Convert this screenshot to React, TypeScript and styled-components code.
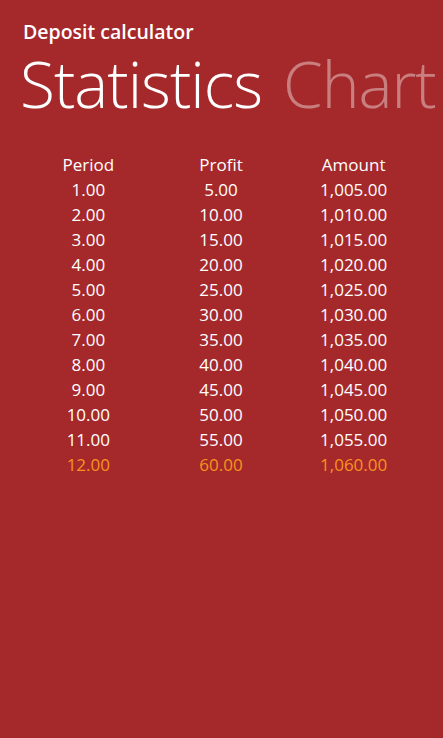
import React from "react";
import styled, { createGlobalStyle } from "styled-components";

const GlobalStyle = createGlobalStyle`
	html, body {
		margin: 0;
		padding: 0;
		background: #a5292b;
	}
`;

const Page = styled.div`
	background: #a5292b;
	color: #ffffff;
	font-family: "Open Sans", "Noto Sans", sans-serif;
	height: 738px;
	overflow: hidden;
	width: 443px;
`;

const AppTitle = styled.div`
	font-size: 19.5px;
	font-weight: 600;
	line-height: 24px;
	padding: 20px 0 0 23px;
`;

const Pivot = styled.div`
	display: flex;
	gap: 21px;
	margin-top: 6px;
	padding-left: 20px;
	white-space: nowrap;
`;

const PivotItem = styled.span<{ $active?: boolean }>`
	color: ${ p => p.$active ? "#ffffff" : "rgba(255,255,255,0.4)" };
	font-size: 64px;
	font-weight: 300;
	letter-spacing: -1px;
	line-height: 68px;
`;

const Table = styled.div`
	display: grid;
	grid-template-columns: repeat(3, 1fr);
	margin: 34px 23px 0 22px;
`;

const Cell = styled.div<{ $highlight?: boolean }>`
	color: ${ p => p.$highlight ? "#f7931e" : "#ffffff" };
	font-size: 17px;
	line-height: 25px;
	text-align: center;
`;

const fmt = (n: number) =>
	n.toLocaleString("en-US", { minimumFractionDigits: 2, maximumFractionDigits: 2 });

const rows = Array.from({ length: 12 }, (_, i) => {
	const period = i + 1;
	const profit = period * 5;
	return { period, profit, amount: 1000 + profit };
});

const App = () => {
	return(
		<Page>
			<GlobalStyle />
			<AppTitle>{ "Deposit calculator" }</AppTitle>
			<Pivot>
				<PivotItem $active>{ "Statistics" }</PivotItem>
				<PivotItem>{ "Chart" }</PivotItem>
			</Pivot>
			<Table>
				<Cell>{ "Period" }</Cell>
				<Cell>{ "Profit" }</Cell>
				<Cell>{ "Amount" }</Cell>
				{ rows.map((r, i) => {
					const last = i === rows.length - 1;
					return (
						<React.Fragment key={ r.period }>
							<Cell $highlight={ last }>{ fmt(r.period) }</Cell>
							<Cell $highlight={ last }>{ fmt(r.profit) }</Cell>
							<Cell $highlight={ last }>{ fmt(r.amount) }</Cell>
						</React.Fragment>
					);
				}) }
			</Table>
		</Page>
	);
};

export default App;
